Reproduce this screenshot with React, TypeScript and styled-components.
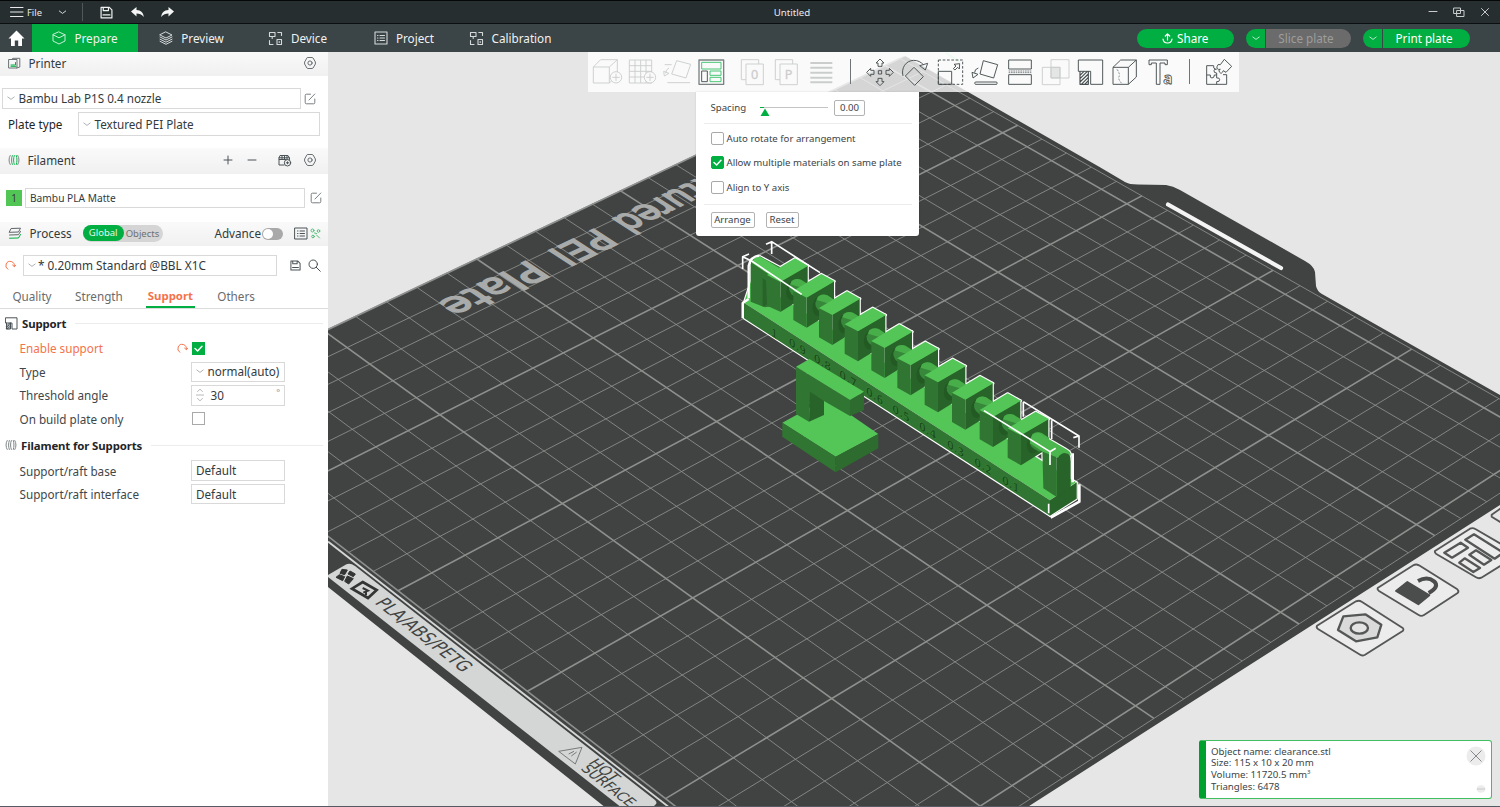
import React from "react";
import styled, { createGlobalStyle, css } from "styled-components";

const GREEN = "#00ae42";
const ORANGE = "#f5724b";
const FONT = `"Noto Sans", "Open Sans", sans-serif`;

const GlobalStyle = createGlobalStyle`
  * { box-sizing: border-box; }
  body { margin: 0; overflow: hidden; font-family: ${FONT}; font-size: 11.7px; color: #323a3d; }
`;

/* ---------- window frame ---------- */

const Window = styled.div`
  width: 1500px;
  height: 807px;
  display: flex;
  flex-direction: column;
  background: #e6e6e6;
  border-bottom: 1px solid #555b60;
`;

const TitleBar = styled.header`
  flex: none;
  height: 24px;
  display: grid;
  grid-template-columns: 1fr auto 1fr;
  align-items: center;
  background: #262e30;
  border-top: 1px solid #060808;
  border-bottom: 1px solid #0c0f10;
  color: #e8eaea;
  font-size: 9.7px;
`;

const TitleLeft = styled.div`
  display: flex;
  align-items: center;
  padding-left: 10px;
  svg { display: block; }
`;

const FileLabel = styled.span`
  margin: 0 15px 0 3px;
  font-size: 9.4px;
`;

const TitleText = styled.div`
  transform: translateX(42px);
`;

const TitleRight = styled.div`
  display: flex;
  justify-content: flex-end;
  gap: 15px;
  padding-right: 10px;
`;

const TitleDivider = styled.i`
  width: 1px;
  height: 18px;
  margin: 0 17px 0 14px;
  background: #50585a;
`;

const NavBar = styled.nav`
  flex: none;
  height: 28px;
  display: flex;
  align-items: center;
  background: #3b4446;
  color: #f0f2f2;
`;

const HomeButton = styled.div`
  width: 32px;
  display: flex;
  justify-content: center;
`;

const NavTab = styled.div<{ $width: number; $active?: boolean }>`
  width: ${(p) => p.$width}px;
  height: 28px;
  display: flex;
  align-items: center;
  justify-content: center;
  gap: 8px;
  background: ${(p) => (p.$active ? GREEN : "transparent")};
`;

const NavActions = styled.div`
  flex: 1;
  display: flex;
  justify-content: flex-end;
  padding-right: 30px;
  gap: 12px;
`;

const Pill = styled.div<{ $width: number; $muted?: boolean; $split?: boolean }>`
  width: ${(p) => p.$width}px;
  height: 19px;
  padding-right: ${(p) => (p.$split ? 5 : 0)}px;
  display: flex;
  align-items: center;
  justify-content: center;
  gap: 4px;
  border-radius: ${(p) => (p.$split ? "0 10px 10px 0" : "10px")};
  background: ${(p) => (p.$muted ? "#6b6b6b" : GREEN)};
  color: ${(p) => (p.$muted ? "#9d9d9d" : "#fff")};
`;

const PillGroup = styled.div`
  display: flex;
  gap: 1px;
`;

const PillArrow = styled.div`
  width: 19px;
  height: 19px;
  display: flex;
  align-items: center;
  justify-content: center;
  border-radius: 10px 0 0 10px;
  background: ${GREEN};
`;

const Main = styled.main`
  flex: 1;
  min-height: 0;
  display: flex;
`;

/* ---------- sidebar ---------- */

const Sidebar = styled.aside`
  flex: none;
  width: 328px;
  height: 754px;
  background: #fff;
`;

const SectionHeader = styled.div<{ $top?: number; $height?: number; $right?: number }>`
  height: ${(p) => p.$height ?? 24}px;
  margin-top: ${(p) => p.$top ?? 0}px;
  padding: 0 ${(p) => p.$right ?? 11}px 2px 8px;
  display: flex;
  align-items: center;
  background: linear-gradient(#fafafa, #f0f0f0);
`;

const SectionName = styled.span`
  flex: 1;
  margin-left: 7.5px;
  display: flex;
  align-items: center;
`;

const Row = styled.div<{ $top: number; $height: number; $left?: number }>`
  height: ${(p) => p.$height}px;
  margin-top: ${(p) => p.$top}px;
  padding-left: ${(p) => p.$left ?? 0}px;
  display: flex;
  align-items: center;
`;

const Combo = styled.div<{ $width: number; $size?: number; $gap?: number; $height?: number }>`
  width: ${(p) => p.$width}px;
  height: ${(p) => p.$height ?? 20.5}px;
  padding: 0 4px 1px;
  display: flex;
  align-items: center;
  border: 1px solid #d9d9d9;
  white-space: nowrap;
  gap: ${(p) => p.$gap ?? 3.5}px;
  font-size: ${(p) => p.$size ?? 11.7}px;
`;

const PlateLabel = styled.span`
  width: 70px;
  padding-bottom: 1px;
  color: #1d2326;
`;

const Swatch = styled.div`
  width: 16px;
  height: 16px;
  margin-right: 3px;
  display: flex;
  align-items: center;
  justify-content: center;
  background: #52c655;
  font-size: 10px;
`;

const IconSlot = styled.span<{ $left?: number }>`
  display: flex;
  margin-left: ${(p) => p.$left ?? 0}px;
`;

const ScopeSwitch = styled.div`
  width: 80px;
  height: 17px;
  margin-left: 11px;
  display: flex;
  align-items: center;
  border-radius: 9px;
  background: #d5d5d5;
  color: #6f6f6f;
  font-size: 9.5px;
`;

const ScopeActive = styled.span`
  width: 41px;
  height: 16px;
  margin-right: 2px;
  line-height: 15px;
  text-align: center;
  border-radius: 8px;
  background: ${GREEN};
  color: #e4f7ea;
`;

const Toggle = styled.div`
  width: 21px;
  height: 12px;
  margin: 2px 11px 0 1px;
  padding: 1px;
  border-radius: 6px;
  background: #a9a9a9;
  &::before {
    content: "";
    display: block;
    width: 10px;
    height: 10px;
    border-radius: 5px;
    background: #fff;
  }
`;

const Tabs = styled.div`
  height: 26px;
  margin-top: 7px;
  padding: 0 0 0 12px;
  display: flex;
  border-bottom: 1px solid #dcdcdc;
`;

const Tab = styled.div<{ $width: number; $active?: boolean }>`
  width: ${(p) => p.$width}px;
  height: 25px;
  line-height: 26px;
  margin-right: 22.2px;
  text-align: center;
  white-space: nowrap;
  display: flex;
  justify-content: center;
  color: #6b6b6b;
  ${(p) =>
    p.$active &&
    css`
      color: ${ORANGE};
      font-weight: 700;
      font-size: 11.4px;
      border-bottom: 2px solid ${GREEN};
    `}
`;

const GroupTitle = styled.div<{ $top: number }>`
  height: 24px;
  margin-top: ${(p) => p.$top}px;
  padding: 0 5px 0 5px;
  display: flex;
  align-items: center;
  gap: 4px;
  color: #1f2528;
  font-weight: 700;
  font-size: 11.4px;
  letter-spacing: -0.12px;
  white-space: nowrap;
  &::after {
    content: "";
    flex: 1;
    height: 1px;
    margin-left: 5px;
    background: #ececec;
  }
`;

const OptionList = styled.div`
  padding-top: 1.5px;
`;

const OptionRow = styled.div`
  height: 23.5px;
  padding-left: 19.5px;
  display: flex;
  align-items: center;
`;

const OptionLabel = styled.span<{ $changed?: boolean }>`
  width: 157.5px;
  color: ${(p) => (p.$changed ? ORANGE : "#40474a")};
`;

const UndoSlot = styled.span`
  width: 14px;
  display: flex;
`;

const Offset = styled.span`
  display: flex;
  padding-left: 1px;
`;

const CheckBox = styled.span<{ $checked?: boolean; $round?: boolean }>`
  flex: none;
  width: 13px;
  height: 13px;
  display: flex;
  align-items: center;
  justify-content: center;
  border: 1px solid ${(p) => (p.$checked ? GREEN : "#a9a9a9")};
  border-radius: ${(p) => (p.$round ? 2 : 0)}px;
  background: ${(p) => (p.$checked ? GREEN : "#fff")};
`;

const Degree = styled.span`
  margin-left: auto;
  align-self: flex-start;
  font-size: 9px;
  line-height: 14px;
  color: #8a8a8a;
`;

/* ---------- viewport ---------- */

const Viewport = styled.section`
  flex: 1;
  position: relative;
  overflow: hidden;
`;

const SceneSvg = styled.svg`
  display: block;
  width: 1172px;
  height: 754px;
`;

const Toolbar = styled.div`
  position: absolute;
  left: 260px;
  top: 0;
  width: 651px;
  height: 39.5px;
  padding-left: 2.4px;
  display: flex;
  align-items: center;
  background: rgba(255, 255, 255, 0.78);
`;

const ToolCell = styled.div<{ $width: number; $before?: number }>`
  flex: none;
  width: ${(p) => p.$width}px;
  margin-left: ${(p) => p.$before ?? 0}px;
  display: flex;
  justify-content: center;
  svg { flex: none; display: block; overflow: visible; }
`;

const ToolDivider = styled.i`
  width: 1px;
  height: 25px;
  margin-left: 1px;
  background: #6f7577;
`;

const ArrangePanel = styled.div`
  position: absolute;
  left: 367.5px;
  top: 39.5px;
  width: 223px;
  height: 144.5px;
  padding: 5px 7px 0 8px;
  border-radius: 0 0 3px 3px;
  background: #fff;
  font-size: 9.65px;
  color: #3c4447;
  box-shadow: 0 0 2px rgba(0, 0, 0, 0.15);
`;

const PanelRow = styled.div<{ $height: number; $gap?: number; $line?: boolean; $bottom?: number }>`
  height: ${(p) => p.$height}px;
  padding: 0 7px ${(p) => p.$bottom ?? 0}px;
  display: flex;
  align-items: center;
  gap: ${(p) => p.$gap ?? 3}px;
  white-space: nowrap;
  border-bottom: ${(p) => (p.$line ? "1px solid #ececec" : "none")};
`;

const PanelBox = styled.div<{ $width: number }>`
  width: ${(p) => p.$width}px;
  height: 16px;
  line-height: 14px;
  text-align: center;
  border: 1px solid #b3b3b3;
  border-radius: 2px;
`;

const SpacingValue = styled(PanelBox)`
  margin-left: -7px;
`;

const InfoCard = styled.div`
  position: absolute;
  left: 871px;
  top: 687.5px;
  width: 293px;
  height: 59px;
  padding: 5px 5px 0 5px;
  display: flex;
  justify-content: space-between;
  border: 1px solid #3fbf5f;
  border-left: 7px solid #00a02f;
  border-radius: 3px;
  background: #fff;
  font-size: 9.7px;
  line-height: 11.8px;
  color: #3c4447;
  sup { font-size: 6px; line-height: 0; vertical-align: 4px; }
`;

const CardButtons = styled.div`
  display: flex;
  flex-direction: column;
  align-items: flex-end;
  justify-content: space-between;
  padding-bottom: 5px;
`;

/* ---------- small icons ---------- */

type IconProps = {
  w: number;
  h?: number;
  box?: string;
  color?: string;
  sw?: number;
  children: React.ReactNode;
};

const Icon = ({ w, h = w, box, color = "#4b5356", sw = 1, children }: IconProps) => (
  <svg
    width={w}
    height={h}
    viewBox={box ?? `0 0 ${w} ${h}`}
    fill="none"
    stroke={color}
    strokeWidth={sw}
    strokeLinecap="round"
    strokeLinejoin="round"
  >
    {children}
  </svg>
);

const Chevron = ({ color = "#a4a9ab", w = 8 }: { color?: string; w?: number }) => (
  <Icon w={w} h={8} box="0 0 8 8" color={color} sw={0.9}>
    <path d="M.8 3 4 5.4 7.2 3" />
  </Icon>
);

const Gear = () => (
  <Icon w={14} color="#596164" sw={0.9}>
    <path d="M4.800 1.500h4.400l.9.5 2.300 4v2l-2.300 4-.9.5H4.800l-.9-.5L1.600 8V6l2.300-4z" />
    <circle cx="7" cy="7" r="2.100" />
  </Icon>
);

const Edit = () => (
  <Icon w={12} color="#6b7275" sw={0.9}>
    <path d="M6.500 1.200H2.400a1.200 1.200 0 0 0-1.200 1.200v7.200a1.200 1.200 0 0 0 1.200 1.200h7.200a1.200 1.200 0 0 0 1.200-1.200V6M5 7l5.800-6" />
  </Icon>
);

const Undo = () => (
  <Icon w={11} color={ORANGE} sw={1}>
    <path d="M2.800 9.300A4.300 4.300 0 1 1 9.400 6.200M7.600 5.100l1.800 1.600L11 5.100" />
  </Icon>
);

const Disk = ({ color = "#4b5356", s = 12 }: { color?: string; s?: number }) => (
  <Icon w={s} box="0 0 12 12" color={color} sw={1.1}>
    <path d="M1 1.200h7.600L11 3.600V11H1zM3 1.200v3h4.800v-3M2.800 8.200h6.400" />
  </Icon>
);

const Nodes = () => (
  <Icon w={15} color="#d5d9da" sw={1.1}>
    <path d="M1.500 1.500h5.500v4h-5.500zM4.200 5.500v2M9.800 1.500h3.700v3M1.500 9.500v4h3.500M9 8.500h4.500v5H9zM11.200 10.500v1" />
  </Icon>
);

const Check = () => (
  <Icon w={11} color="#fff" sw={1.5}>
    <path d="m2 5.500 2.600 2.500L9 3.300" />
  </Icon>
);

const Spool = ({ tint }: { tint: string }) => (
  <Icon w={12} color="#70777a" sw={0.9}>
    <path d="M2.200 1.500C.6 4 .6 8 2.200 10.500M9.800 1.500c1.600 2.500 1.600 6.500 0 9" />
    <path d="M4.300 1.500c-1 2.500-1 6.500 0 9M6.300 1.500c-1 2.500-1 6.500 0 9M8.300 1.500c.9 2.500.9 6.500 0 9" stroke={tint} />
  </Icon>
);

/* ---------- toolbar icons, 3 units to a pixel ---------- */

const Tool = ({ faint, children }: { faint?: boolean; children: React.ReactNode }) => (
  <svg
    width={32}
    height={28}
    viewBox="0 0 96 84"
    fill="none"
    stroke={faint ? "#cbcdcd" : "#454d4f"}
    strokeWidth={2.8}
    strokeLinejoin="round"
    fontFamily="Noto Sans, sans-serif"
  >
    {children}
  </svg>
);

const PlusBadge = () => (
  <>
    <circle cx="72" cy="58" r="17" fill="#fafafa" />
    <path d="M61 58h22M72 47v22" />
  </>
);

const moveArrow = "M48 3 60 15H54V25H42V15H36Z";

/* ---------- build plate projection ---------- */

type Pt = [number, number];
const SIZE = 256;
const corners: Pt[] = [
  [162.8, 407.9],
  [832, 928],
  [1577, 443],
  [900, 58.5],
];

const project = (() => {
  const [[x0, y0], [x1, y1], [x2, y2], [x3, y3]] = corners;
  const dx1 = x1 - x2, dx2 = x3 - x2, sx = x0 - x1 + x2 - x3;
  const dy1 = y1 - y2, dy2 = y3 - y2, sy = y0 - y1 + y2 - y3;
  const det = dx1 * dy2 - dx2 * dy1;
  const g = (sx * dy2 - dx2 * sy) / det;
  const h = (dx1 * sy - sx * dy1) / det;
  return (a: number, b: number): Pt => {
    const u = b / SIZE, v = a / SIZE;
    const w = g * u + h * v + 1;
    return [
      ((x1 - x0 + g * x1) * u + (x3 - x0 + h * x3) * v + x0) / w,
      ((y1 - y0 + g * y1) * u + (y3 - y0 + h * y3) * v + y0) / w,
    ];
  };
})();

const slopes = (a: number, b: number) => {
  const p = project(a, b), pa = project(a + 0.1, b), pb = project(a, b + 0.1);
  return {
    p,
    da: [(pa[0] - p[0]) * 10, (pa[1] - p[1]) * 10] as Pt,
    db: [(pb[0] - p[0]) * 10, (pb[1] - p[1]) * 10] as Pt,
  };
};

const unproject = (x: number, y: number): Pt => {
  let a = 128, b = 128;
  for (let i = 0; i < 12; i++) {
    const { p, da, db } = slopes(a, b);
    const ex = x - p[0], ey = y - p[1];
    const det = da[0] * db[1] - da[1] * db[0];
    a += (ex * db[1] - ey * db[0]) / det;
    b += (da[0] * ey - da[1] * ex) / det;
  }
  return [a, b];
};

const onPlate = (x: number, y: number, facing: "back" | "side") => {
  const { da, db } = slopes(...unproject(x, y));
  const r: Pt = facing === "back" ? [-da[0], -da[1]] : db;
  const d: Pt = facing === "back" ? [-db[0], -db[1]] : [-da[0], -da[1]];
  return `matrix(${[...r, ...d, x, y].map((n) => n.toFixed(4)).join(" ")})`;
};

const stops = [...Array.from({ length: 26 }, (_, i) => i * 10), SIZE];

const Grid = () => (
  <g stroke="#8e908e">
    {stops.map((s) => {
      const bold = s % 50 === 0;
      const [ax, ay] = project(s, 0), [bx, by] = project(s, SIZE);
      const [cx, cy] = project(0, s), [dx, dy] = project(SIZE, s);
      return (
        <g key={s} strokeWidth={bold ? 1.6 : 0.95} strokeOpacity={bold ? 1 : 0.9}>
          <line x1={ax} y1={ay} x2={bx} y2={by} />
          <line x1={cx} y1={cy} x2={dx} y2={dy} />
        </g>
      );
    })}
  </g>
);

type PlateTextProps = {
  x: number;
  y: number;
  facing: "back" | "side";
  size: number;
  length: number;
  end?: boolean;
  children: string;
};

const PlateText = ({ x, y, facing, size, length, end, children }: PlateTextProps) => (
  <text
    transform={onPlate(x, y, facing)}
    fontSize={size}
    textLength={length}
    lengthAdjust="spacingAndGlyphs"
    textAnchor={end ? "end" : "start"}
  >
    {children}
  </text>
);

/* ---------- printed model, 3 units to a pixel ---------- */

const TOP = "#54c657";
const LEFT = "#317532";
const RIGHT = "#286329";

const blockFronts: Pt[] = [
  [151, 138], [230, 185], [307, 237], [384, 286], [464, 336],
  [542, 388], [624, 439], [706, 491], [789, 543], [873, 598],
];

const Block = ({ at: [x, y], first }: { at: Pt; first?: boolean }) => (
  <g transform={`translate(${x} ${y})`}>
    <path d="M0 0 82-47V42L0 93Z" fill={RIGHT} />
    <path d={first ? "M-44-22 0 0V92L-40 74Z" : "M-40-16 0 0V93L-40 70Z"} fill={LEFT} />
    <path d="M-40-18 44-68 84-46 0 3Z" fill={TOP} />
    <ellipse cx="38" cy="28" rx="20" ry="30" fill="#235a24" stroke="none" transform="rotate(12 38 28)" />
    <path d="M34 0Q46-10 62-4L84 12V48L54 52Q24 40 26 18Z" fill="#37883a" stroke="none" />
    <path d="M34 0Q46-10 62-4L84 10V26L30 10Z" fill="#48ae4a" stroke="none" />
  </g>
);

const BarShapes = () => (
  <>
    <path d="M42 203 64 135 150 186 1038 742 960 796Z" fill={TOP} />
    <path d="M42 203 960 796V842L42 250Z" fill={LEFT} />
    <path d="M960 796 1040 742V791L960 842Z" fill={RIGHT} />
    <path d="M62 200V88Q66 64 90 64L150 96V210L105 217Z" fill={LEFT} />
    <path d="M66 84Q72 62 92 66L170 112 150 140Z" fill={TOP} />
    <path d="M98 130 113 140V208L98 215Z" fill={RIGHT} stroke="none" />
    {blockFronts.map((p, i) => (
      <Block key={i} at={p} first={i === 0} />
    ))}
    <path d="M937 640 980 660V786L940 760Z" fill={LEFT} />
    <path d="M980 786V670Q990 645 1012 650 1022 658 1022 680V760Z" fill={RIGHT} />
    <path d="M925 594 1008 642Q1024 650 1022 662 1000 644 984 668L938 650 900 625Q898 598 925 594Z" fill="#4cb64e" />
  </>
);

const engraved: [string, number, number][] = [
  ["1", 122, 293], ["0.9", 176, 322], ["0.8", 251, 370], ["0.7", 328, 419],
  ["0.6", 408, 470], ["0.5", 487, 522], ["0.4", 567, 574], ["0.3", 651, 628],
  ["0.2", 733, 681], ["0.1", 816, 735],
];

const Model = () => (
  <g transform="translate(730 235) scale(.33333)" strokeLinejoin="round">
    <g stroke="#fff" strokeWidth="7"><BarShapes /></g>
    <BarShapes />
    <g fontFamily="DejaVu Sans, sans-serif" fontWeight="700" fontSize="38" fill="#1a481b" stroke="#3d913e" strokeWidth="1.500">
      {engraved.map(([t, x, y]) => (
        <text key={t} transform={`matrix(.78 .5 0 .9 ${x} ${y + 8})`}>{t}</text>
      ))}
    </g>
    <g stroke="#fff" strokeWidth="5" fill="none">
      <path d="M108 28 125 20 270 113M125 20V57M38 102V65L57 57M38 65 65 78 215 178" />
      <path d="M762 527 960 650V690M960 650 977 640M880 500 1047 603V638M1030 608 1047 603M880 500V545M965 556V612M956 806V835" />
      <path d="M1028 655V742M1048 748V800L962 848" strokeWidth="8" />
      <path d="M56 190V92Q62 64 88 62M38 250V204L56 192" strokeWidth="7" />
    </g>
    <path d="M157 563 290 490 445 597 317 665Z" fill={TOP} />
    <path d="M157 563 317 665V712L157 605Z" fill={LEFT} />
    <path d="M317 665 445 597V640L317 712Z" fill="#2d6b2e" />
    <path d="M240 468 282 495V540L237 560Z" fill={RIGHT} />
    <path d="M198 395 360 495V543L282 498 240 470 237 560 198 537Z" fill={LEFT} />
    <path d="M360 495 402 470V525L360 543Z" fill="#2d6b2e" />
    <path d="M198 395 238 372 402 470 360 495Z" fill={TOP} />
  </g>
);

const PlateButtons = () => (
  <g transform="translate(1190 500) scale(.33333)" strokeLinejoin="round" stroke="#555756" strokeWidth="5.500" fill="#ececec">
    <path d="M381 377Q378 383 384 387L508 463Q516 469 524 465L638 393Q643 388 637 383L515 305Q507 300 498 304Z" />
    <path d="M460 349 526 343 574 374 562 412 498 424 444 390Z" fill="#d9dad9" strokeWidth="7" />
    <ellipse cx="508" cy="384" rx="26" ry="17" strokeWidth="7" fill="#e4e4e4" />
    <path d="M564 263Q560 268 567 273L686 345Q694 350 702 345L803 279Q808 273 802 268L687 196Q678 191 670 196Z" />
    <path d="M652 246 718 286 685 313 618 273Z" fill="#4b4d4c" stroke="#4b4d4c" />
    <path d="M684 243Q712 228 732 244 750 260 716 279" fill="none" strokeWidth="12" stroke="#4b4d4c" />
    <path d="M736 152Q732 157 739 162L858 232Q866 237 874 233L940 192V136L856 87Q848 82 840 86Z" />
    <path d="M763 158 812 128 834 143 786 173ZM826 119 852 103 940 158 914 176ZM808 188 824 175 870 204 850 216ZM838 164 858 151 904 180 882 194Z" strokeWidth="7" />
    <path d="M940 72 905 50 905 44 940 20" fill="none" />
  </g>
);

const Scene = () => (
  <SceneSvg viewBox="328 52 1172 754">
    <path
      d="M328 329 905 56 1100 167.300 1125 182Q1129 184.500 1138 184.500L1166 185Q1173 186 1180 190L1305 261Q1314 266 1315 272L1316 286Q1317 291 1322 294L1500 395V505L1190 703 1026 808H606L328 587Z"
      fill="#414342"
    />
    <path d="M328 329 905 56" stroke="#a5a7a6" strokeWidth="1" />
    <Grid />
    <path d="M328 541.500 670 808" stroke="#d4d7d5" strokeWidth="1.800" />
    <path d="M1168 204.500 1281 268" stroke="#f4f4f4" strokeWidth="4.200" strokeLinecap="round" />
    <path d="M328 575 346 564.500Q350 562.500 355 566L655 800Q658 803 655 805L652 808H622L328 577Z" fill="#d3d6d4" />
    <g fill="#a9abaa" stroke="#a9abaa" strokeWidth=".7" fontFamily="DejaVu Sans, sans-serif">
      <PlateText x={529} y={259.5} facing="back" size={14} length={31.5}>Plate</PlateText>
      <PlateText x={597} y={227.5} facing="back" size={14} length={18}>PEI</PlateText>
      <PlateText x={610} y={220} facing="back" size={14} length={46} end>Textured</PlateText>
    </g>
    <g fill="#414342" fontFamily="DejaVu Sans, sans-serif">
      <PlateText x={374} y={603} facing="side" size={4.9} length={35.5}>PLA/ABS/PETG</PlateText>
      <PlateText x={587.5} y={763} facing="side" size={3.8} length={9}>HOT</PlateText>
      <PlateText x={580} y={769} facing="side" size={3.7} length={17.5}>SURFACE</PlateText>
    </g>
    <g transform="translate(328 540) scale(.33333)">
      <path d="M42 88 58 90 50 104 36 100ZM66 93 82 102 76 110 60 102ZM34 104 50 110 44 122 24 112ZM58 108 76 116 62 132 50 124Z" fill="#333534" stroke="#333534" strokeWidth="3" />
      <path d="M104 126 146 150 120 174 72 146Z" fill="none" stroke="#333534" strokeWidth="8" />
      <path d="M104 144 120 152 106 158M114 154V166" fill="none" stroke="#333534" strokeWidth="6" />
      <path d="M692 634 762 622 742 672Z M722 642 738 634M730 648 746 636" fill="none" stroke="#77797a" strokeWidth="3" />
    </g>
    <PlateButtons />
    <Model />
    <path d="M946 53 960 62" stroke="#a9e8c0" strokeWidth="1.500" />
  </SceneSvg>
);

/* ---------- page parts ---------- */

const ToolbarIcons = () => (
  <Toolbar>
    <ToolCell $width={34.5}><Tool faint><path d="M4 27H52V75H4ZM4 27 26 5H76L52 27M76 5V52L52 75" /><PlusBadge /></Tool></ToolCell>
    <ToolCell $width={34.5}><Tool faint><path d="M10 6H77V75H10ZM27 6V75M44 6V75M60 6V75M10 23H77M10 40H77M10 57H77" /><PlusBadge /></Tool></ToolCell>
    <ToolCell $width={34.5}><Tool faint><path d="M47 8 89 19 75 60 32 48ZM11 20H32M24 30Q14 34 14 46M8 40 10 54 24 46ZM19 74H87" /></Tool></ToolCell>
    <ToolCell $width={34.5}>
      <Tool>
        <rect x="12" y="6" width="74" height="73" stroke="#7b8183" strokeWidth="4" />
        <path d="M20 13H78V33H20ZM45 39H78V52H45ZM45 58H78V71H45Z" stroke="#3dc46d" />
        <path d="M20 39H37V71H20Z" />
      </Tool>
    </ToolCell>
    {["0", "P"].map((t, i) => (
      <ToolCell key={t} $width={34.5} $before={i ? 0 : 6}>
        <Tool faint>
          <path d="M30 65H16V5H68V18M30 18H82V80H30Z" />
          <text x="56" y="63" fontSize="38" textAnchor="middle" fill="#cbcdcd" strokeWidth=".8">{t}</text>
        </Tool>
      </ToolCell>
    ))}
    <ToolCell $width={34.5}><Tool faint><path d="M16 15H82M16 29H82M16 44H82M16 59H82M16 73H82" strokeWidth="6" /></Tool></ToolCell>
    <ToolCell $width={24.2}><ToolDivider /></ToolCell>
    <ToolCell $width={35.1}>
      <Tool>
        {[0, 90, 180, 270].map((r) => <path key={r} d={moveArrow} transform={`rotate(${r} 48 43)`} />)}
        <rect x="43" y="38" width="10" height="10" />
      </Tool>
    </ToolCell>
    <ToolCell $width={35.1}><Tool><path d="M45 28 73 56 47 82 19 54ZM12 54C6 30 20 8 44 7 56 7 66 12 73 20M62 23 86 16 79 36Z" /></Tool></ToolCell>
    <ToolCell $width={35.1}><Tool><rect x="13" y="6" width="73" height="73" strokeDasharray="8 5" /><path d="M13 40H53V79H13ZM58 32 66 24 60 19 77 17 76 33 71 28 63 36Z" /></Tool></ToolCell>
    <ToolCell $width={35.1}><Tool><path d="M43 8 86 20 74 60 33 48ZM28 30Q16 34 17 44M9 43 12 60 27 49ZM19 72H83Q86 75 83 79H19Q15 75 19 72" /></Tool></ToolCell>
    <ToolCell $width={35.1}><Tool><path d="M14 6H82V33H14ZM14 50H82V79H14Z" /><path d="M14 39H82M14 44H82" strokeWidth="2" strokeDasharray="5 2" /></Tool></ToolCell>
    <ToolCell $width={35.1}><Tool faint><path d="M36 28H63V60H36Z" fill="#e4e5e5" /><path d="M10 28H63V80H10ZM36 5H90V60H36Z" /></Tool></ToolCell>
    <ToolCell $width={35.1}>
      <Tool>
        <path d="M13 6H86V79H50V40H13Z" />
        <path d="M18 40V79H43V40M18 52 30 40M18 62 40 40M18 72 43 48M22 79 43 58M32 79 43 68" strokeWidth="3.400" />
      </Tool>
    </ToolCell>
    <ToolCell $width={35.1}><Tool><path d="M12 28H58V79H12ZM12 28 35 6H82L58 28M82 6V57L58 79" /><path d="M24 34Q34 48 30 56T40 78" strokeWidth="2" strokeDasharray="6 4" /></Tool></ToolCell>
    <ToolCell $width={35.1}>
      <Tool>
        <path d="M15 6H70V20H63V15H48V79H37V15H22V20H15Z" />
        <text x="58" y="78" fontSize="46" fontWeight="700" strokeWidth="2.500">a</text>
      </Tool>
    </ToolCell>
    <ToolCell $width={23}><ToolDivider /></ToolCell>
    <ToolCell $width={32}>
      <Tool>
        <path d="M17 79V23H38Q36 32 44 34M17 51H28Q26 60 33 60T40 51H47V45Q38 45 39 38T47 34M47 51V60Q56 58 56 65T47 71V79M17 79H77V50H66" />
        <path d="M70 4 92 25 75 43 67 38Q62 50 56 43T58 34Q46 36 48 26T58 20Z" />
      </Tool>
    </ToolCell>
  </Toolbar>
);

const Panel = () => (
  <ArrangePanel>
    <PanelRow $height={27.5} $gap={13} $bottom={4} $line>
      Spacing
      <svg width="69" height="16" viewBox="0 0 69 16">
        <path d="M1 7.500H69" stroke="#c4c4c4" />
        <path d="M1 7.500H5" stroke={GREEN} />
        <path d="M1.500 16 6 8.500 10.500 16Z" fill={GREEN} />
      </svg>
      <SpacingValue $width={31}>0.00</SpacingValue>
    </PanelRow>
    <PanelRow $height={28}><CheckBox $round />Auto rotate for arrangement</PanelRow>
    <PanelRow $height={21}><CheckBox $round $checked><Check /></CheckBox>Allow multiple materials on same plate</PanelRow>
    <PanelRow $height={32} $bottom={3} $line><CheckBox $round />Align to Y axis</PanelRow>
    <PanelRow $height={30} $gap={11}><PanelBox $width={44}>Arrange</PanelBox><PanelBox $width={33}>Reset</PanelBox></PanelRow>
  </ArrangePanel>
);

export default function App() {
  return (
    <>
      <GlobalStyle />
      <Window>
        <TitleBar>
          <TitleLeft>
            <Icon w={14} h={12} color="#e8eaea"><path d="M.5 1.500h12.500M.5 6h12.500M.5 10.500h12.500" /></Icon>
            <FileLabel>File</FileLabel>
            <Chevron color="#e8eaea" w={11} />
            <TitleDivider />
            <Disk color="#f0f2f2" s={13} />
            <IconSlot $left={18}><Icon w={13} h={11}><path d="M0 4.500 5.500 0v3C10 3 12.500 6 12.800 10 10.500 7.200 8.500 6.500 5.500 6.500V9.500Z" fill="#f4f6f6" stroke="none" /></Icon></IconSlot>
            <IconSlot $left={17}><Icon w={13} h={11}><path d="M13 4.500 7.500 0v3C3 3 .5 6 .2 10 2.500 7.200 4.500 6.500 7.500 6.500V9.500Z" fill="#f4f6f6" stroke="none" /></Icon></IconSlot>
          </TitleLeft>
          <TitleText>Untitled</TitleText>
          <TitleRight>
            <Icon w={10} h={10} color="#c8cccc"><path d="M1 4.500h8" /></Icon>
            <Icon w={12} h={10} color="#c8cccc"><path d="M1 1h6.500v5.500H1zM4 3.500h7v6H4z" /></Icon>
            <Icon w={10} h={10} color="#c8cccc"><path d="m1.500 1.500 7 7M8.500 1.500l-7 7" /></Icon>
          </TitleRight>
        </TitleBar>

        <NavBar>
          <HomeButton>
            <svg width="17" height="17" viewBox="0 0 17 17"><path d="M8.500.5 16.500 8.500H14V16H10.200V10.500H6.800V16H3V8.500H.5Z" fill="#fff" /></svg>
          </HomeButton>
          <NavTab $width={106} $active>
            <Icon w={14} color="#c6efd5"><path d="M7 1 13 3.800V10L7 13 1 10V3.800ZM1 3.800 7 6.800 13 3.800" /></Icon>Prepare
          </NavTab>
          <NavTab $width={107}>
            <Icon w={14} color="#d5d9da"><path d="M7 1 13 4 7 7 1 4ZM1 6 7 9 13 6M1 8.200 7 11.200 13 8.200M1 10.300 7 13.300 13 10.300" /></Icon>Preview
          </NavTab>
          <NavTab $width={105}><Nodes />Device</NavTab>
          <NavTab $width={108}>
            <Icon w={14} color="#d5d9da" sw={1.1}><path d="M1 1H13V13H1ZM3.500 4.500h.5M3.500 7h.5M3.500 9.500h.5M6 4.500h4.500M6 7h4.500M6 9.500h4.500" /></Icon>Project
          </NavTab>
          <NavTab $width={104}><Nodes />Calibration</NavTab>
          <NavActions>
            <Pill $width={97.5}>
              <Icon w={11} color="#fff" sw={1.2}><path d="M5.500 7V1M3.300 3 5.500.8 7.700 3M1 6Q1.500 10 5.500 10T10 6" /></Icon>Share
            </Pill>
            <PillGroup><PillArrow><Chevron color="#c8f3d8" /></PillArrow><Pill $width={85} $muted $split>Slice plate</Pill></PillGroup>
            <PillGroup><PillArrow><Chevron color="#c8f3d8" /></PillArrow><Pill $width={87} $split>Print plate</Pill></PillGroup>
          </NavActions>
        </NavBar>

        <Main>
          <Sidebar>
            <SectionHeader>
              <Icon w={13} color="#6b7275"><path d="M1 2.500h8v8.500H1zM3.500 2.500 5 1.300H11.800V10L9 11" /><path d="M3 8h4.500V5.500M3 9.300h5" stroke={GREEN} /></Icon>
              <SectionName>Printer</SectionName>
              <Gear />
            </SectionHeader>
            <Row $top={12} $height={21} $left={2}>
              <Combo $width={299}><Chevron />Bambu Lab P1S 0.4 nozzle</Combo>
              <IconSlot $left={2.5}><Edit /></IconSlot>
            </Row>
            <Row $top={3} $height={24} $left={8}>
              <PlateLabel>Plate type</PlateLabel>
              <Combo $width={242} $height={23.5}><Chevron />Textured PEI Plate</Combo>
            </Row>
            <SectionHeader $top={12} $height={26}>
              <Spool tint={GREEN} />
              <SectionName>Filament</SectionName>
              <Icon w={10}><path d="M5 1v8M1 5h8" /></Icon>
              <IconSlot $left={14}><Icon w={10}><path d="M1 5h8" /></Icon></IconSlot>
              <IconSlot $left={20}>
                <Icon w={15} h={13}><path d="M7 11H2V5.500h9M2 5.500V4L3 1.500h8L12.500 4v1.500M5 1.500v3.500M7.500 1.500v3.500M10 1.500v3.500M2 3.800h10" /><circle cx="10.500" cy="8.800" r="3.200" fill="#f4f4f4" /><path d="M9.300 8.800h2.500M10.500 7.800v2" /></Icon>
              </IconSlot>
              <IconSlot $left={11}><Gear /></IconSlot>
            </SectionHeader>
            <Row $top={13.5} $height={21} $left={6}>
              <Swatch>1</Swatch>
              <Combo $width={280} $size={10.2}>Bambu PLA Matte</Combo>
              <IconSlot $left={4.5}><Edit /></IconSlot>
            </Row>
            <SectionHeader $top={13.5} $right={7}>
              <Icon w={14} h={13} color="#5d6568"><path d="M3.500 1.500 12.500 1.200 10.500 5 1.500 5.300ZM1.500 8 10.500 7.700 12.500 4.500" /><path d="M1.500 11.200 10.500 11 12.500 7.500" stroke={GREEN} /></Icon>
              <SectionName>
                Process
                <ScopeSwitch><ScopeActive>Global</ScopeActive>Objects</ScopeSwitch>
              </SectionName>
              Advance
              <Toggle />
              <Icon w={14} h={13}><path d="M1 1H13V12H1ZM3.500 4h.5M3.500 6.500h.5M3.500 9h.5M6 4h4.500M6 6.500h4.500M6 9h4.500" /></Icon>
              <IconSlot $left={2}>
                <Icon w={11} color="#4fbf77"><circle cx="2.500" cy="2.500" r="1.500" /><circle cx="8.500" cy="3" r="1.300" /><circle cx="3" cy="8.500" r="1.300" /><path d="M4.500 5 6.500 5.500M6.500 7 9.500 10" /></Icon>
              </IconSlot>
            </SectionHeader>
            <Row $top={9} $height={21} $left={5}>
              <Undo />
              <IconSlot $left={6.5}><Combo $width={254} $gap={2.5} $size={11.8}><Chevron />* 0.20mm Standard @BBL X1C</Combo></IconSlot>
              <IconSlot $left={13}><Disk s={11} /></IconSlot>
              <IconSlot $left={7}><Icon w={13}><circle cx="5.200" cy="5.200" r="4.200" /><path d="m8.300 8.300 4 4" /></Icon></IconSlot>
            </Row>
            <Tabs>
              <Tab $width={40}>Quality</Tab>
              <Tab $width={49.5}>Strength</Tab>
              <Tab $width={49} $active>Support</Tab>
              <Tab $width={38}>Others</Tab>
            </Tabs>
            <GroupTitle $top={2.2}>
              <Icon w={13} color="#4b5356"><path d="M.8.8H12V12H7V6H.8ZM1.500 6V12H5.500V6M1.500 9 4.500 6M2 12 5.500 8M3.500 12 5.500 10M1.500 11 5 6.500" /></Icon>
              Support
            </GroupTitle>
            <OptionList>
              <OptionRow><OptionLabel $changed>Enable support</OptionLabel><UndoSlot><Undo /></UndoSlot><Offset><CheckBox $checked><Check /></CheckBox></Offset></OptionRow>
              <OptionRow><OptionLabel>Type</OptionLabel><UndoSlot /><Combo $width={94}><Chevron />normal(auto)</Combo></OptionRow>
              <OptionRow>
                <OptionLabel>Threshold angle</OptionLabel><UndoSlot />
                <Combo $width={94}>
                  <Icon w={8} h={16} color="#a4a9ab"><path d="M1.500 4.500 4 2.200 6.500 4.500M0 8h8M1.500 11.500 4 13.800 6.500 11.500" strokeWidth=".8" /></Icon>
                  <IconSlot $left={3}>30</IconSlot>
                  <Degree>°</Degree>
                </Combo>
              </OptionRow>
              <OptionRow><OptionLabel>On build plate only</OptionLabel><UndoSlot /><Offset><CheckBox /></Offset></OptionRow>
            </OptionList>
            <GroupTitle $top={2.8}><Spool tint="#70777a" />Filament for Supports</GroupTitle>
            <OptionList>
              <OptionRow><OptionLabel>Support/raft base</OptionLabel><UndoSlot /><Combo $width={94}>Default</Combo></OptionRow>
              <OptionRow><OptionLabel>Support/raft interface</OptionLabel><UndoSlot /><Combo $width={94}>Default</Combo></OptionRow>
            </OptionList>
          </Sidebar>

          <Viewport>
            <Scene />
            <ToolbarIcons />
            <Panel />
            <InfoCard>
              <div>
                Object name: clearance.stl<br />
                Size: 115 x 10 x 20 mm<br />
                Volume: 11720.5 mm<sup>3</sup><br />
                Triangles: 6478
              </div>
              <CardButtons>
                <svg width="20" height="20" viewBox="0 0 20 20"><circle cx="10" cy="10" r="9.500" fill="#ececec" /><path d="m4.500 4.500 11 11M15.500 4.500l-11 11" stroke="#7a7f81" strokeWidth=".9" /></svg>
                <svg width="10" height="8" viewBox="0 0 10 8"><ellipse cx="5" cy="4" rx="4.500" ry="3.800" fill="#ececec" /><path d="M1 4h8" stroke="#c9c9c9" /></svg>
              </CardButtons>
            </InfoCard>
          </Viewport>
        </Main>
      </Window>
    </>
  );
}
